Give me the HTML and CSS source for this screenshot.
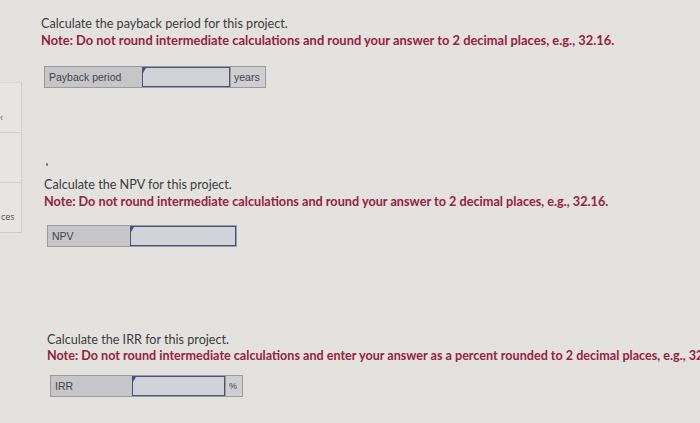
FILE: index.html
```html
<!DOCTYPE html>
<html>
<head>
<meta charset="utf-8">
<link rel="stylesheet" href="styles.css">
</head>
<body>
<div class="page">
  <aside class="side">
    <div class="side-row side-row--a"><span class="side-mark">&lsaquo;</span></div>
    <div class="side-row"></div>
    <div class="side-row side-row--c"><span class="side-text">ces</span></div>
  </aside>
  <main class="main">
    <section class="q q--one">
      <p class="prompt">Calculate the payback period for this project.</p>
      <p class="note">Note: Do not round intermediate calculations and round your answer to 2 decimal places, e.g., 32.16.</p>
      <div class="field field--one">
        <div class="cell label label--payback">Payback period</div>
        <div class="cell input input--payback"><span class="caret"></span></div>
        <div class="cell unit unit--years">years</div>
      </div>
    </section>
    <span class="speck"></span>
    <section class="q q--two">
      <p class="prompt">Calculate the NPV for this project.</p>
      <p class="note note--two">Note: Do not round intermediate calculations and round your answer to 2 decimal places, e.g., 32.16.</p>
      <div class="field field--two">
        <div class="cell label label--npv">NPV</div>
        <div class="cell input input--npv"><span class="caret"></span></div>
      </div>
    </section>
    <section class="q q--three">
      <p class="prompt">Calculate the IRR for this project.</p>
      <p class="note note--three">Note: Do not round intermediate calculations and enter your answer as a percent rounded to 2 decimal places, e.g., 32.16.</p>
      <div class="field field--three">
        <div class="cell label label--irr">IRR</div>
        <div class="cell input input--irr"><span class="caret"></span></div>
        <div class="cell unit unit--pct">%</div>
      </div>
    </section>
  </main>
</div>
</body>
</html>
```

FILE: styles.css
```css
* { box-sizing: border-box; }
html, body {
  margin: 0;
  padding: 0;
  width: 700px;
  height: 423px;
  overflow: hidden;
  background: #e3e2de;
}
body {
  font-family: Lato, "Open Sans", sans-serif;
  color: #3a3a3c;
}
.page {
  display: flex;
  height: 423px;
  overflow: hidden;
}
.side {
  width: 22px;
  flex: none;
  margin-top: 82px;
  height: 151px;
  border-right: 1px solid #cfcdca;
  border-bottom: 1px solid #cfcdca;
  display: flex;
  flex-direction: column;
  background: #e6e5e2;
}
.side-row {
  flex: 1;
  border-top: 1px solid #d2d0cc;
  position: relative;
}
.side-row--a { border-top-color: #dad8d4; }
.side-mark {
  position: absolute;
  left: 0;
  top: 28px;
  font-size: 11px;
  color: #666;
  line-height: 1;
}
.side-text {
  position: absolute;
  left: 1px;
  top: 27px;
  font-size: 9px;
  color: #555;
  font-family: "Open Sans", sans-serif;
}
.main {
  flex: 1;
  min-width: 0;
  overflow: hidden;
  padding-left: 19px;
  padding-top: 16px;
  display: flex;
  flex-direction: column;
  align-items: flex-start;
}
.q { display: flex; flex-direction: column; align-items: flex-start; }
.prompt {
  margin: 0;
  font-size: 12.6px;
  line-height: 16px;
  color: #3c3c3e;
  white-space: nowrap;
}
.note {
  margin: 0;
  font-size: 12.9px;
  line-height: 16px;
  font-weight: 700;
  color: #98213f;
  white-space: nowrap;
}
.note--two { font-size: 12.7px; }
.note--three { font-size: 12.6px; line-height: 15px; }
.q--two { margin-left: 3px; margin-top: 11px; }
.q--three { margin-left: 6px; margin-top: 85px; }
.speck {
  display: block;
  width: 2px;
  height: 3px;
  background: #777;
  margin-left: 5px;
  margin-top: 75px;
  border-radius: 1px;
}
.field {
  display: flex;
  height: 22px;
  margin-left: 3px;
  border: 1px solid #9a9aa0;
  background: #c9c9cc;
}
.field--one { margin-top: 18px; }
.field--two { margin-top: 16px; }
.field--three { margin-top: 12px; }
.cell {
  height: 100%;
  font-family: "Liberation Sans", Arial, sans-serif;
  font-size: 10.5px;
  color: #444;
  display: flex;
  align-items: center;
}
.label { padding-left: 4px; background: #c6c6c9; }
.label--payback { width: 97px; }
.label--npv { width: 82px; }
.label--irr { width: 81px; }
.input {
  position: relative;
  border: 1.5px solid #4e5470;
  background: #d2d3d8;
}
.input--payback { width: 88px; }
.input--npv { width: 106px; }
.input--irr { width: 93px; }
.caret {
  position: absolute;
  left: 0;
  top: 0;
  width: 0;
  height: 0;
  border-top: 5px solid #3b4f9a;
  border-right: 3px solid transparent;
}
.unit {
  padding-left: 3px;
  background: #cfcfd2;
  border-left: 1px solid #9a9aa0;
}
.unit--years { width: 35px; }
.unit--pct { width: 17px; font-size: 9px; }
```
